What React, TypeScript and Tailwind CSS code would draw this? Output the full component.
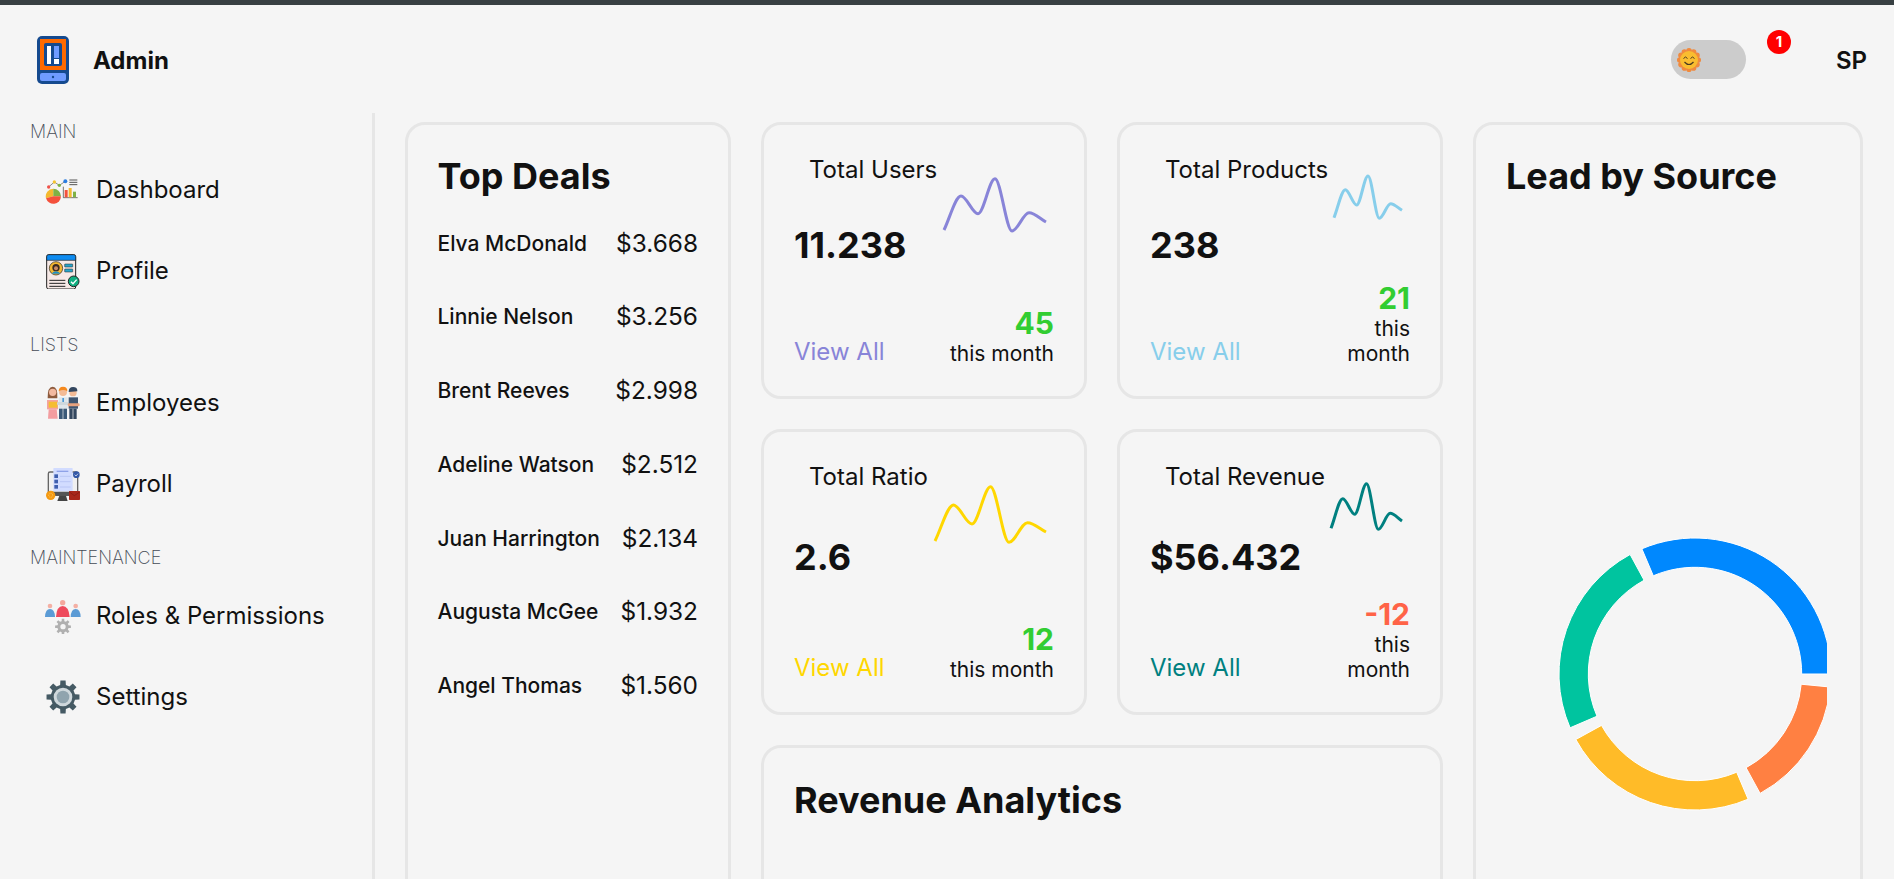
import React from 'react';

const deals = [
  { name: 'Elva McDonald', amount: '$3.668' },
  { name: 'Linnie Nelson', amount: '$3.256' },
  { name: 'Brent Reeves', amount: '$2.998' },
  { name: 'Adeline Watson', amount: '$2.512' },
  { name: 'Juan Harrington', amount: '$2.134' },
  { name: 'Augusta McGee', amount: '$1.932' },
  { name: 'Angel Thomas', amount: '$1.560' },
];

// same monotone curve the sparkline lib uses
function monotonePath(xs: number[], ys: number[]) {
  const n = xs.length;
  const slopes: number[] = [];
  for (let i = 0; i < n - 1; i++) slopes.push((ys[i + 1] - ys[i]) / (xs[i + 1] - xs[i]));
  const t: number[] = new Array(n).fill(0);
  for (let i = 1; i < n - 1; i++) {
    const a = slopes[i - 1];
    const b = slopes[i];
    t[i] = a * b <= 0 ? 0 : (2 * a * b) / (a + b);
  }
  t[0] = slopes[0];
  t[n - 1] = slopes[n - 2];
  let d = `M${xs[0]},${ys[0]}`;
  for (let i = 0; i < n - 1; i++) {
    const h = (xs[i + 1] - xs[i]) / 3;
    d += `C${xs[i] + h},${ys[i] + t[i] * h} ${xs[i + 1] - h},${ys[i + 1] - t[i + 1] * h} ${xs[i + 1]},${ys[i + 1]}`;
  }
  return d;
}

function Spark({ width, color, ys }: { width: number; color: string; ys: number[] }) {
  const xs = ys.map((_, i) => (i * width) / (ys.length - 1));
  return (
    <svg width={width} height={90} className="mt-px block self-start overflow-visible">
      <path d={monotonePath(xs, ys)} fill="none" stroke={color} strokeWidth={3} />
    </svg>
  );
}

function StatCard({
  title,
  value,
  viewClass,
  rightClass,
  change,
  changeClass,
  chart,
}: {
  title: string;
  value: string;
  viewClass: string;
  rightClass: string;
  change: string;
  changeClass: string;
  chart: React.ReactNode;
}) {
  return (
    <div className="flex justify-between rounded-[20px] border-[3px] border-[#e6e6e6] p-[30px]">
      <div className="flex flex-col">
        <div className="pl-[15px] text-[24px] leading-[29px] whitespace-nowrap">{title}</div>
        <div className="flex flex-1 items-center pb-[30px] text-[36px] leading-[44px] font-bold">{value}</div>
        <div className={`text-[24px] leading-[29px] ${viewClass}`}>View All</div>
      </div>
      <div className={`flex flex-col items-end justify-between text-right ${rightClass}`}>
        {chart}
        <div>
          <div className={`text-[30px] leading-[36px] font-bold ${changeClass}`}>{change}</div>
          <div className="text-[21px] leading-[25px]">this month</div>
        </div>
      </div>
    </div>
  );
}

// zoom coords are used directly in the viewBoxes below
function DashboardIcon() {
  return (
    <svg viewBox="135 516 108 108" className="h-9 w-9 shrink-0">
      <path d="M147 560 L163 546 L178 556 L196 544" fill="none" stroke="#555" strokeWidth="2" />
      <circle cx="146" cy="561" r="5" fill="#f0524a" />
      <circle cx="163" cy="546" r="5" fill="#f4c430" />
      <circle cx="178" cy="556" r="5" fill="#7cb342" />
      <circle cx="196" cy="544" r="6" fill="#2a7de1" />
      <path d="M160 589 L160 566 A23 23 0 0 0 138 595 Z" fill="#f4b92f" />
      <path d="M160 589 L160 566 A23 23 0 0 1 183 589 Z" fill="#7fb245" />
      <path d="M160 589 L183 589 A23 23 0 0 1 138 595 Z" fill="#f4513c" />
      <path d="M190 560 V593 H233" fill="none" stroke="#333" strokeWidth="2" />
      <rect x="194" y="570" width="9" height="22" fill="#f4513c" />
      <rect x="206" y="564" width="9" height="28" fill="#f4b92f" />
      <rect x="219" y="575" width="9" height="17" fill="#7fb245" />
      <path d="M208 540 H232 M208 547 H232 M208 554 H232" stroke="#555" strokeWidth="3" />
    </svg>
  );
}

function ProfileIcon() {
  return (
    <svg viewBox="135 756 108 108" className="h-9 w-9 shrink-0">
      <rect x="140" y="761" width="87" height="103" rx="6" fill="#f6e9e6" stroke="#222" strokeWidth="3" />
      <path d="M140 778 V767 a6 6 0 0 1 6 -6 H221 a6 6 0 0 1 6 6 V778 Z" fill="#0d8bf0" stroke="#222" strokeWidth="2" />
      <circle cx="168" cy="802" r="20" fill="#f4b731" stroke="#222" strokeWidth="2" />
      <circle cx="168" cy="800" r="11" fill="#3a2a22" />
      <circle cx="168" cy="802" r="6" fill="#c98a66" />
      <path d="M155 818 a14 12 0 0 1 26 0 Z" fill="#1f8fc4" />
      <rect x="194" y="789" width="24" height="9" rx="1" fill="#29a4c9" stroke="#222" strokeWidth="1.5" />
      <rect x="194" y="804" width="24" height="9" rx="1" fill="#29a4c9" stroke="#222" strokeWidth="1.5" />
      <path d="M148 838 H196 M148 847 H196 M148 856 H196" stroke="#222" strokeWidth="3" />
      <circle cx="221" cy="841" r="16" fill="#0fae80" stroke="#222" strokeWidth="3" />
      <path d="M213 842 L219 848 L230 836" fill="none" stroke="#fff" strokeWidth="4" />
    </svg>
  );
}

function EmployeesIcon() {
  return (
    <svg viewBox="135 195 108 108" className="h-9 w-9 shrink-0">
      <path d="M143 235 Q142 200 158 200 Q174 200 172 235 Z" fill="#8d5a3c" />
      <circle cx="158" cy="217" r="11" fill="#f2b9a0" />
      <path d="M141 240 H174 V268 H141 Z" fill="#f4a3a0" />
      <rect x="146" y="245" width="26" height="18" fill="#f5bd32" />
      <path d="M146 268 H170 L173 296 H144 Z" fill="#f39da0" />
      <rect x="176" y="232" width="27" height="34" fill="#dfe6ea" />
      <rect x="187" y="234" width="5" height="18" fill="#4b9ad6" />
      <circle cx="189" cy="216" r="12" fill="#f3bb96" />
      <path d="M176 214 Q176 200 189 200 Q203 200 202 214 Q190 206 176 214 Z" fill="#f58a1f" />
      <rect x="171" y="246" width="34" height="9" rx="4" fill="#cfd8dc" />
      <rect x="177" y="266" width="11" height="31" fill="#3c5a78" />
      <rect x="190" y="266" width="11" height="31" fill="#3c5a78" />
      <rect x="206" y="232" width="28" height="34" fill="#3f5570" />
      <circle cx="219" cy="218" r="11" fill="#f3bb96" />
      <path d="M206 216 Q206 201 219 201 Q233 201 232 214 L206 216 Z" fill="#33475f" />
      <rect x="203" y="250" width="36" height="9" rx="4" fill="#e8a27e" />
      <rect x="208" y="266" width="10" height="31" fill="#33475f" />
      <rect x="220" y="266" width="10" height="31" fill="#33475f" />
    </svg>
  );
}

function PayrollIcon() {
  return (
    <svg viewBox="135 435 108 108" className="h-9 w-9 shrink-0">
      <rect x="145" y="453" width="88" height="70" rx="5" fill="#f0f0f0" stroke="#666" strokeWidth="4" />
      <rect x="145" y="512" width="88" height="12" fill="#555" />
      <path d="M178 524 H198 L203 540 H172 Z" fill="#444" />
      <rect x="160" y="441" width="58" height="70" rx="2" fill="#d2dcff" />
      <path d="M170 451 H205" stroke="#8ea2e8" strokeWidth="4" />
      <rect x="163" y="460" width="11" height="11" fill="#3f5fae" />
      <rect x="163" y="476" width="11" height="11" fill="#3f5fae" />
      <rect x="163" y="492" width="11" height="11" fill="#3f5fae" />
      <path d="M180 466 H212 M180 482 H212 M180 498 H212" stroke="#aebcf0" strokeWidth="2" />
      <circle cx="229" cy="461" r="10" fill="#3358a8" />
      <path d="M224 461 L228 465 L234 458" fill="none" stroke="#fff" strokeWidth="2" />
      <circle cx="152" cy="523" r="14" fill="#f59a12" />
      <circle cx="152" cy="523" r="6" fill="none" stroke="#ffd27a" strokeWidth="2" strokeDasharray="3 2" />
      <rect x="207" y="510" width="33" height="27" rx="2" fill="#a8261a" />
      <path d="M207 512 L223 524 L240 512" fill="none" stroke="#7c1a12" strokeWidth="2" />
    </svg>
  );
}

function gearPath(cx: number, cy: number, outer: number, root: number, teeth: number) {
  let d = '';
  const step = (Math.PI * 2) / teeth;
  for (let i = 0; i < teeth; i++) {
    const a = i * step;
    const pts = [
      [root, a - step * 0.3],
      [outer, a - step * 0.2],
      [outer, a + step * 0.2],
      [root, a + step * 0.3],
    ];
    pts.forEach(([r, ang], j) => {
      const x = (cx + r * Math.cos(ang)).toFixed(1);
      const y = (cy + r * Math.sin(ang)).toFixed(1);
      d += `${i === 0 && j === 0 ? 'M' : 'L'}${x},${y}`;
    });
  }
  return d + 'Z';
}

function Person({ x, color, head }: { x: number; color: string; head: string }) {
  return (
    <g>
      <circle cx={x} cy={855} r={7} fill={head} />
      <path d={`M${x - 15} 888 Q${x - 14} 864 ${x} 864 Q${x + 14} 864 ${x + 15} 888 Z`} fill={color} />
    </g>
  );
}

function RolesIcon() {
  return (
    <svg viewBox="135 831 108 108" className="h-9 w-9 shrink-0">
      <Person x={150} color="#5b9bd5" head="#f4b0a4" />
      <Person x={227} color="#5b9bd5" head="#f4b0a4" />
      <circle cx="188" cy="845" r="8" fill="#f4a79d" />
      <path d="M168 888 Q170 855 188 855 Q206 855 209 888 Z" fill="#ee4a5c" />
      <path d={gearPath(189, 917, 24, 17, 8)} fill="#b0b0b0" />
      <circle cx="189" cy="917" r="8" fill="#f5f5f5" />
    </svg>
  );
}

function SettingsIcon() {
  return (
    <svg viewBox="135 1077 108 108" className="h-9 w-9 shrink-0">
      <path d={gearPath(189, 1131, 50, 37, 8)} fill="#455a64" />
      <circle cx="189" cy="1131" r="28" fill="#cfd8dc" />
      <circle cx="189" cy="1131" r="19" fill="#90a4ae" />
    </svg>
  );
}

function LogoIcon() {
  return (
    <svg viewBox="0 0 32 48" className="h-12 w-8 shrink-0">
      <rect width="32" height="48" rx="5" fill="#154a8f" />
      <rect x="3" y="3" width="26" height="31" fill="#ff6a00" />
      <rect x="7" y="7" width="18" height="23" rx="2" fill="#154a8f" />
      <rect x="10" y="10" width="4" height="18" fill="#fff" />
      <rect x="17" y="10" width="5" height="12" fill="#6f9bff" />
      <rect x="17" y="23" width="5" height="5" fill="#fff" />
      <rect x="3" y="37" width="26" height="8" rx="2" fill="#6f9bff" />
      <circle cx="16" cy="41" r="1.2" fill="#154a8f" />
    </svg>
  );
}

function SunFace() {
  const petals = Array.from({ length: 12 }, (_, i) => (i * Math.PI) / 6);
  return (
    <svg viewBox="0 0 24 24" className="h-6 w-6 shrink-0">
      {petals.map((a) => (
        <circle key={a} cx={12 + 9.2 * Math.cos(a)} cy={12 + 9.2 * Math.sin(a)} r="2.8" fill="#f08a3e" />
      ))}
      <circle cx="12" cy="12" r="9" fill="#f9bd30" />
      <path d="M6.5 10.5 Q8.5 7.5 10.5 10.5 M13.5 10.5 Q15.5 7.5 17.5 10.5" fill="none" stroke="#4a3a20" strokeWidth="1" />
      <path d="M7.5 14 Q12 19 16.5 14" fill="none" stroke="#4a3a20" strokeWidth="1.2" />
    </svg>
  );
}

function polar(cx: number, cy: number, r: number, deg: number) {
  const rad = (deg * Math.PI) / 180;
  return `${cx + r * Math.cos(rad)},${cy - r * Math.sin(rad)}`;
}

function arc(cx: number, cy: number, inner: number, outer: number, from: number, to: number) {
  const large = to - from > 180 ? 1 : 0;
  return `M${polar(cx, cy, outer, from)}A${outer},${outer} 0 ${large} 0 ${polar(cx, cy, outer, to)}L${polar(cx, cy, inner, to)}A${inner},${inner} 0 ${large} 1 ${polar(cx, cy, inner, from)}Z`;
}

const slices = [
  { from: 0, to: 113, color: '#0088FE' },
  { from: 118.5, to: 203.3, color: '#00C49F' },
  { from: 208.8, to: 293, color: '#FFBB28' },
  { from: 298.6, to: 354.5, color: '#FF8042' },
];

function Donut() {
  return (
    <svg width={321} height={320} className="mt-[323.5px] block shrink-0">
      {slices.map((s) => (
        <path key={s.color} d={arc(189, 154, 106.7, 136, s.from, s.to)} fill={s.color} stroke="#fff" strokeWidth={1} />
      ))}
    </svg>
  );
}

function NavItem({ icon, label }: { icon: React.ReactNode; label: string }) {
  return (
    <div className="flex h-[81px] items-center gap-[15px] pl-[15px] text-[24px]">
      {icon}
      <span>{label}</span>
    </div>
  );
}

function SectionLabel({ children }: { children: string }) {
  return <div className="mb-[7px] text-[18px] leading-5 font-extralight text-[#444b55]">{children}</div>;
}

export default function App() {
  return (
    <div className="flex h-screen flex-col overflow-hidden bg-[#f5f5f5] font-['Inter',sans-serif] text-[#111]">
      <div className="h-[5px] shrink-0 bg-[#384043]" />
      <header className="flex h-[108px] shrink-0 items-center justify-between pt-px pr-[27px] pl-[37px]">
        <div className="flex items-center gap-6">
          <LogoIcon />
          <span className="pt-[2px] text-[24px] font-bold">Admin</span>
        </div>
        <div className="flex items-center">
          <div className="flex h-[39px] w-[75px] items-center rounded-full bg-[#cccccc] pl-[6px]">
            <SunFace />
          </div>
          <div className="relative ml-[21px] h-[39px] w-6">
            <span className="absolute -top-[10px] left-0 flex h-6 w-6 items-center justify-center rounded-full bg-[#ff0000] text-[15px] font-bold text-white">
              1
            </span>
          </div>
          <span className="ml-[45px] pt-[2px] text-[24px] font-semibold">SP</span>
        </div>
      </header>
      <div className="flex min-h-0 flex-1">
        <aside className="w-[375px] shrink-0 border-r-[3px] border-[#e6e6e6] pt-[9px] pl-[30px]">
          <SectionLabel>MAIN</SectionLabel>
          <NavItem icon={<DashboardIcon />} label="Dashboard" />
          <NavItem icon={<ProfileIcon />} label="Profile" />
          <div className="mt-[24px]">
            <SectionLabel>LISTS</SectionLabel>
            <NavItem icon={<EmployeesIcon />} label="Employees" />
            <NavItem icon={<PayrollIcon />} label="Payroll" />
          </div>
          <div className="mt-[24px]">
            <SectionLabel>MAINTENANCE</SectionLabel>
            <NavItem icon={<RolesIcon />} label="Roles & Permissions" />
            <NavItem icon={<SettingsIcon />} label="Settings" />
          </div>
        </aside>
        <main className="min-w-0 flex-1 overflow-hidden pt-[8.5px] pl-[29.5px]">
          <div className="grid grid-cols-[326.5px_326px_326px_389.5px] grid-rows-[277.5px_285.5px_400px] gap-x-[30px] gap-y-[30.3px]">
            <div className="row-span-3 rounded-[20px] border-[3px] border-[#e6e6e6] p-[30px]">
              <h2 className="text-[36px] leading-[42px] font-bold">Top Deals</h2>
              <div className="mt-[32px] flex flex-col gap-[44.8px]">
                {deals.map((d) => (
                  <div key={d.name} className="flex items-center justify-between leading-[29px]">
                    <span className="text-[21px] font-medium">{d.name}</span>
                    <span className="text-[24.4px]">{d.amount}</span>
                  </div>
                ))}
              </div>
            </div>
            <StatCard
              title="Total Users"
              value="11.238"
              viewClass="text-[#8884d8]"
              rightClass="w-[110px]"
              change="45"
              changeClass="text-[#32cd32]"
              chart={<Spark width={102} color="#8884d8" ys={[74, 40, 57.7, 22.7, 75, 56.7, 66]} />}
            />
            <StatCard
              title="Total Products"
              value="238"
              viewClass="text-[#87ceeb]"
              rightClass="w-[76px]"
              change="21"
              changeClass="text-[#32cd32]"
              chart={<Spark width={68} color="#87ceeb" ys={[61.7, 33.7, 49, 20, 62.3, 47.7, 54.3]} />}
            />
            <div className="row-span-3 flex flex-col overflow-hidden rounded-[20px] border-[3px] border-[#e6e6e6] p-[30px]">
              <h2 className="text-[36px] leading-[42px] font-bold whitespace-nowrap">Lead by Source</h2>
              <Donut />
            </div>
            <StatCard
              title="Total Ratio"
              value="2.6"
              viewClass="text-[#ffd700]"
              rightClass="w-[119px]"
              change="12"
              changeClass="text-[#32cd32]"
              chart={<Spark width={111} color="#ffd700" ys={[78, 42, 61, 23.7, 79.3, 59.7, 69]} />}
            />
            <StatCard
              title="Total Revenue"
              value="$56.432"
              viewClass="text-[#008080]"
              rightClass="w-[79px]"
              change="-12"
              changeClass="text-[#ff6347]"
              chart={<Spark width={71} color="#008080" ys={[65.3, 35.7, 51.3, 20.7, 66.3, 50.3, 58]} />}
            />
            <div className="col-span-2 rounded-[20px] border-[3px] border-[#e6e6e6] p-[30px]">
              <h2 className="text-[36px] leading-[44px] font-bold">Revenue Analytics</h2>
            </div>
          </div>
        </main>
      </div>
    </div>
  );
}
